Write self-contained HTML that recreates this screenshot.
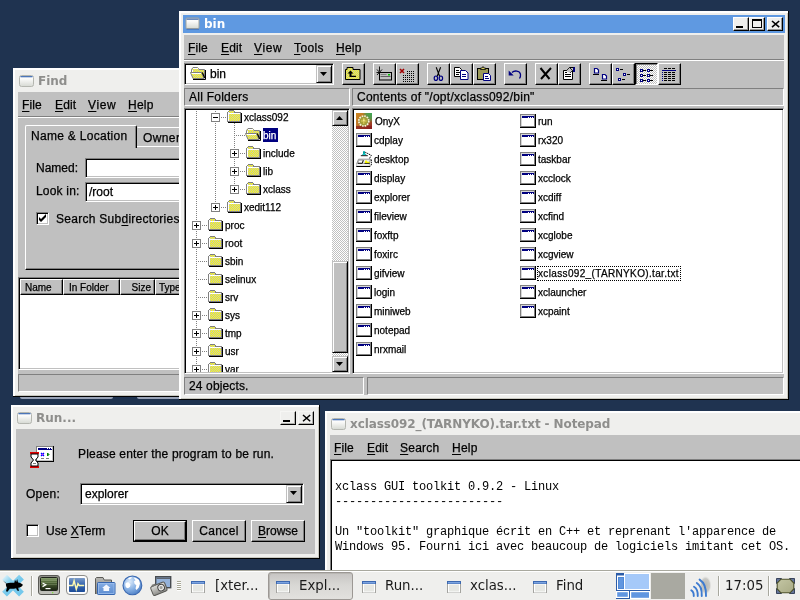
<!DOCTYPE html>
<html lang="en"><head><meta charset="utf-8"><title>xclass desktop</title>
<style>
*{box-sizing:border-box;margin:0;padding:0}
html,body{width:800px;height:600px;overflow:hidden;background:#1f3350}
body{position:relative;font-family:"Liberation Sans",sans-serif;font-size:12px;color:#000;line-height:14px}
.a{position:absolute}
.t{position:absolute;white-space:pre;line-height:14px;-webkit-text-stroke:.25px currentColor}
.s{font-size:10px}
u{text-decoration:underline;text-underline-offset:1.5px;text-decoration-thickness:1px}
.win{position:absolute;background:#efefed;border-right:1px solid #000;border-bottom:1px solid #000;box-shadow:inset 2px 2px 0 #fff,inset -1px -1px 0 #c8c8c0}
.ttl{position:absolute;font-family:"DejaVu Sans","Liberation Sans",sans-serif;font-weight:bold;font-size:12px;line-height:14px;white-space:pre}
.cli{position:absolute;background:#c0c0c0;overflow:hidden}
.sunk{position:absolute;border:1px solid;border-color:#808080 #fff #fff #808080;box-shadow:inset 1px 1px 0 #000,inset -1px -1px 0 #c0c0c0}
.sunk1{position:absolute;border:1px solid;border-color:#808080 #fff #fff #808080}
.btn{position:absolute;background:#c0c0c0;border:1px solid;border-color:#fff #000 #000 #fff;box-shadow:inset -1px -1px 0 #808080}
.sbtn{position:absolute;background:#c0c0c0;border:1px solid;border-color:#c0c0c0 #000 #000 #c0c0c0;box-shadow:inset 1px 1px 0 #fff,inset -1px -1px 0 #808080}
.btnp{position:absolute;border:1px solid;border-color:#000 #fff #fff #000;box-shadow:inset 1px 1px 0 #808080;background:repeating-conic-gradient(#fff 0% 25%,#c0c0c0 0% 50%) 0 0/2px 2px}
.dith{position:absolute;background:repeating-conic-gradient(#fff 0% 25%,#c0c0c0 0% 50%) 0 0/2px 2px}
.etch{position:absolute;height:2px;border-top:1px solid #808080;border-bottom:1px solid #fff}
.wh{background:#fff}
.dv{position:absolute;width:1px;background-image:linear-gradient(#808080 50%,transparent 50%);background-size:1px 2px}
.dh{position:absolute;height:1px;background-image:linear-gradient(90deg,#808080 50%,transparent 50%);background-size:2px 1px}
.pm{position:absolute;width:9px;height:9px;border:1px solid #808080;background:#fff}
.pm i{position:absolute;left:1px;top:3px;width:5px;height:1px;background:#000}
.pm b{position:absolute;left:3px;top:1px;width:1px;height:5px;background:#000}
.tb{position:absolute;font-family:"DejaVu Sans","Liberation Sans",sans-serif;font-size:13.33px;line-height:16px;white-space:pre;color:#1a1a1a}
.mono{font-family:"Liberation Mono",monospace;font-size:12px;letter-spacing:-0.2px;line-height:15px;white-space:pre}
svg{position:absolute;overflow:visible}
#r{position:absolute;left:0;top:0;width:800px;height:600px;overflow:hidden;will-change:transform}
</style></head>
<body>
<div id="r">
<svg width="0" height="0" style="left:0;top:0"><defs>
<pattern id="yd" width="2" height="2" patternUnits="userSpaceOnUse"><rect width="2" height="2" fill="#ffff00"/><rect width="1" height="1" fill="#c0c0c0"/><rect x="1" y="1" width="1" height="1" fill="#c0c0c0"/></pattern>
<g id="fold" shape-rendering="crispEdges"><rect x="2" y="1" width="5" height="2" fill="url(#yd)"/><rect x="1" y="3" width="12" height="8" fill="url(#yd)"/><rect x="1" y="3" width="12" height="1" fill="#fff"/><rect x="1" y="2" width="1" height="9" fill="#fff"/><g fill="#808080"><rect x="2" y="0" width="5" height="1"/><rect x="1" y="1" width="1" height="1"/><rect x="7" y="1" width="1" height="1"/><rect x="0" y="2" width="1" height="10"/><rect x="7" y="2" width="7" height="1"/><rect x="13" y="3" width="1" height="9"/><rect x="0" y="11" width="14" height="1"/></g><rect x="14" y="3" width="1" height="10" fill="#000"/><rect x="1" y="12" width="14" height="1" fill="#000"/></g>
<g id="ofold"><path d="M1.500 5.500V2.500L3 0.500H7.500L9 2.500H14.500V10H12.500L11.500 5.500Z" fill="url(#yd)" stroke="#808080"/><path d="M2.500 3V5" stroke="#fff"/><path d="M3 1.500H8" stroke="#fff"/><path d="M0.500 5.500H11.500L14 11.500H3Z" fill="url(#yd)" stroke="#808080"/><path d="M1.500 6.500H11" stroke="#fff"/><path d="M12.300 5.500L14.700 11" stroke="#000" stroke-width="1.200"/><path d="M15.500 3V12.500H3" stroke="#000" fill="none"/></g>
<g id="app"><rect x="0" y="0" width="16" height="14" fill="#000"/><rect x="0" y="0" width="15" height="13" fill="#808080"/><rect x="1" y="1" width="13" height="11" fill="#d8d8d8"/><rect x="2" y="2" width="12" height="10" fill="#fff"/><rect x="2" y="2" width="12" height="2" fill="#000080"/><rect x="8" y="3" width="1" height="1" fill="#fff"/><rect x="10" y="3" width="1" height="1" fill="#fff"/><rect x="12" y="3" width="1" height="1" fill="#fff"/></g>
<g id="wico"><rect x="0.5" y="0.5" width="13" height="10" rx="1.5" fill="#f2f2f0" stroke="#b8b8b4"/><rect x="1" y="1" width="12" height="2" fill="#fff"/></g>
<linearGradient id="wg" x1="0" y1="0" x2="0" y2="1"><stop offset="0" stop-color="#ffffff"/><stop offset=".3" stop-color="#fbfbfa"/><stop offset="1" stop-color="#d6d9d3"/></linearGradient>
</defs></svg>
<div class="a" style="left:20px;top:397px;width:93px;height:2px;background:#98a2b6;border-radius:0 0 3px 3px"></div><div class="a" style="left:137px;top:397px;width:60px;height:2px;background:#98a2b6;border-radius:0 0 3px 3px"></div><div class="win" style="left:13px;top:68px;width:400px;height:329px"><svg style="left:6px;top:7px" width="16" height="13"><rect x="0.5" y="0.5" width="14" height="11" rx="2" fill="url(#wg)" stroke="#b4b6b0"/><rect x="1.5" y="1" width="12" height="1.3" fill="#4c76b8"/></svg><div class="ttl" style="left:25px;top:6px;color:#8e8e8c">Find</div><div class="cli" style="left:5px;top:24px;width:390px;height:300px"><div class="t" style="left:4px;top:6px;letter-spacing:.1px"><u>F</u>ile</div><div class="t" style="left:37px;top:6px;letter-spacing:.15px"><u>E</u>dit</div><div class="t" style="left:70px;top:6px;letter-spacing:.6px"><u>V</u>iew</div><div class="t" style="left:110px;top:6px;letter-spacing:.25px"><u>H</u>elp</div><div class="etch" style="left:0;top:24px;width:390px"></div><div class="a" style="left:7px;top:54px;width:330px;height:124px;border:1px solid;border-color:#fff #000 #000 #fff;box-shadow:inset -1px -1px 0 #808080"></div><div class="a" style="left:119px;top:35px;width:60px;height:19px;border:1px solid;border-color:#fff #000 transparent transparent;border-bottom:0"></div><div class="t" style="left:125px;top:39px;letter-spacing:.4px">Owner</div><div class="a" style="left:7px;top:33px;width:112px;height:23px;background:#c0c0c0;border:1px solid;border-color:#fff #000 transparent #fff;border-bottom:0;border-radius:2px 2px 0 0;box-shadow:inset -1px 0 0 #808080"></div><div class="t" style="left:13px;top:37px;letter-spacing:.29px">Name &amp; Location</div><div class="t" style="left:18px;top:69px;">Named:</div><div class="t" style="left:18px;top:92px;letter-spacing:.19px">Look in:</div><div class="sunk wh" style="left:67px;top:66px;width:200px;height:20px"></div><div class="sunk wh" style="left:67px;top:90px;width:200px;height:20px"></div><div class="t" style="left:71px;top:93px;">/root</div><div class="sunk wh" style="left:18px;top:120px;width:13px;height:13px"><svg style="left:2px;top:2px" width="7" height="7"><path d="M0 2v3l2 2l5-5v-3l-5 5z" fill="#000" transform="translate(0,0)"/></svg></div><div class="t" style="left:38px;top:120px;letter-spacing:.27px">Search Sub<u>d</u>irectories</div><div class="sunk wh" style="left:0px;top:185px;width:390px;height:93px"></div><div class="btn" style="left:2px;top:187px;width:43px;height:16px"></div><div class="t" style="left:7px;top:189px;font-size:10px">Name</div><div class="btn" style="left:45px;top:187px;width:57px;height:16px"></div><div class="t" style="left:51px;top:189px;font-size:10px">In Folder</div><div class="btn" style="left:102px;top:187px;width:35px;height:16px"></div><div class="t" style="left:102px;width:31px;text-align:right;top:189px;font-size:10px">Size</div><div class="btn" style="left:137px;top:187px;width:60px;height:16px"></div><div class="t" style="left:141px;top:189px;font-size:10px">Type</div><div class="sunk1" style="left:0px;top:282px;width:390px;height:18px"></div></div></div><div class="win" style="left:325px;top:411px;width:520px;height:200px"><svg style="left:6px;top:7px" width="16" height="13"><rect x="0.5" y="0.5" width="14" height="11" rx="2" fill="url(#wg)" stroke="#b4b6b0"/><rect x="1.5" y="1" width="12" height="1.3" fill="#4c76b8"/></svg><div class="ttl" style="left:25px;top:6px;color:#8e8e8c;letter-spacing:-.1px">xclass092_(TARNYKO).tar.txt - Notepad</div><div class="cli" style="left:5px;top:24px;width:510px;height:170px"><div class="t" style="left:4px;top:6px;letter-spacing:.1px"><u>F</u>ile</div><div class="t" style="left:37px;top:6px;letter-spacing:.15px"><u>E</u>dit</div><div class="t" style="left:70px;top:6px;letter-spacing:.25px"><u>S</u>earch</div><div class="t" style="left:122px;top:6px;letter-spacing:.25px"><u>H</u>elp</div><div class="sunk wh" style="left:0;top:24px;width:500px;height:150px"></div><div class="a mono" style="left:5px;top:45px">xclass GUI toolkit 0.9.2 - Linux</div><div class="a mono" style="left:5px;top:60px">------------------------</div><div class="a mono" style="left:5px;top:90px">Un "toolkit" graphique écrit en C++ et reprenant l'apparence de</div><div class="a mono" style="left:5px;top:105px">Windows 95. Fourni ici avec beaucoup de logiciels imitant cet OS.</div></div></div><div class="win" style="left:11px;top:405px;width:309px;height:154px"><svg style="left:6px;top:7px" width="16" height="13"><rect x="0.5" y="0.5" width="14" height="11" rx="2" fill="url(#wg)" stroke="#b4b6b0"/><rect x="1.5" y="1" width="12" height="1.3" fill="#4c76b8"/></svg><div class="ttl" style="left:25px;top:6px;color:#8e8e8c">Run...</div><div class="a" style="left:269px;top:6px;width:16px;height:14px;background:#efefed;border:1px solid;border-color:#f6f6f4 #000 #000 #f6f6f4;box-shadow:inset -1px -1px 0 #b0b0ac"><div class="a" style="left:2px;top:8px;width:7px;height:2px;background:#000"></div></div><div class="a" style="left:287px;top:6px;width:16px;height:14px;background:#efefed;border:1px solid;border-color:#f6f6f4 #000 #000 #f6f6f4;box-shadow:inset -1px -1px 0 #b0b0ac"><svg style="left:3px;top:2px" width="10" height="8"><path d="M1 1L8.200 7.200M8.200 1L1 7.200" stroke="#000" stroke-width="1.500" fill="none"/></svg></div><div class="cli" style="left:5px;top:24px;width:299px;height:125px"><svg style="left:14px;top:17px" width="25" height="23"><rect x="6" y="0" width="18" height="16" fill="#000"/><rect x="6" y="0" width="17" height="15" fill="#808080"/><rect x="7" y="1" width="16" height="14" fill="#c0c0c0"/><rect x="7" y="1" width="15" height="13" fill="#fff"/><rect x="8" y="2" width="14" height="2" fill="#000080"/><rect x="17" y="2" width="1" height="1" fill="#fff"/><rect x="19" y="2" width="1" height="1" fill="#fff"/><rect x="21" y="2" width="1" height="1" fill="#fff"/><path d="M11 7l3 3M14 7l-3 3" stroke="#0000ff" stroke-width="1.2"/><rect x="12" y="8" width="1" height="1" fill="#f0f"/><path d="M17.500 10v-3l1.500 1.500z" fill="#008000" stroke="#008000"/><path d="M11 12.500h3M16 12.500h3" stroke="#808080"/><rect x="0" y="6" width="9" height="2" fill="#e00000"/><rect x="0" y="20" width="9" height="2" fill="#e00000"/><path d="M1 8h7v3l-2.500 3l2.500 3v3h-7v-3l2.500-3l-2.500-3z" fill="#fff" stroke="#000" stroke-width="1"/><path d="M3 17.500h3" stroke="#808080"/></svg><div class="t" style="left:62px;top:18px;letter-spacing:.19px">Please enter the program to be run.</div><div class="t" style="left:10px;top:58px;letter-spacing:.26px">Open:</div><div class="sunk wh" style="left:64px;top:54px;width:224px;height:22px;"></div><div class="t" style="left:69px;top:58px;">explorer</div><div class="sbtn" style="left:270px;top:56px;width:16px;height:18px;"><svg style="left:3px;top:5px" width="8" height="4"><path d="M0 0h7l-3.500 4z" fill="#000"/></svg></div><div class="sunk wh" style="left:10px;top:95px;width:13px;height:13px;"></div><div class="t" style="left:30px;top:95px;">Use <u>X</u>Term</div><div class="a" style="left:117px;top:91px;width:54px;height:22px;background:#000"></div><div class="btn" style="left:118px;top:92px;width:52px;height:20px;"></div><div class="t" style="left:118px;top:95px;width:52px;height:14px;text-align:center">OK</div><div class="btn" style="left:176px;top:91px;width:54px;height:22px;"></div><div class="t" style="left:176px;top:95px;width:54px;height:14px;text-align:center;letter-spacing:.35px">Cancel</div><div class="btn" style="left:235px;top:91px;width:54px;height:22px;"></div><div class="t" style="left:235px;top:95px;width:54px;height:14px;text-align:center"><u>B</u>rowse</div></div></div><div class="win" style="left:179px;top:11px;width:610px;height:389px"><div class="a" style="left:4px;top:4px;width:602px;height:18px;background:#5f99e1"></div><svg style="left:6px;top:6px" width="16" height="14"><rect x="1" y="1" width="13" height="10.500" rx="1" fill="url(#wg)" stroke="#a2a49e"/><rect x="1.500" y="1.500" width="12" height="1.300" fill="#4c72ac"/><path d="M1.500 12.300h12.500" stroke="#3c68b0" stroke-width="1" opacity=".7"/></svg><div class="ttl" style="left:25px;top:6px;color:#fff">bin</div><div class="a" style="left:554px;top:6px;width:16px;height:14px;background:#efefed;border:1px solid;border-color:#fff #000 #000 #fff;box-shadow:inset -1px -1px 0 #9a9a98"><div class="a" style="left:2px;top:8px;width:7px;height:2px;background:#000"></div></div><div class="a" style="left:570px;top:6px;width:16px;height:14px;background:#efefed;border:1px solid;border-color:#fff #000 #000 #fff;box-shadow:inset -1px -1px 0 #9a9a98"><div class="a" style="left:2px;top:1px;width:10px;height:9px;border:1px solid #000;border-top-width:2px"></div></div><div class="a" style="left:588px;top:6px;width:16px;height:14px;background:#efefed;border:1px solid;border-color:#fff #000 #000 #fff;box-shadow:inset -1px -1px 0 #9a9a98"><svg style="left:3px;top:2px" width="10" height="8"><path d="M1 1L8.200 7.200M8.200 1L1 7.200" stroke="#000" stroke-width="1.600" fill="none"/></svg></div><div class="cli" style="left:5px;top:24px;width:600px;height:360px"><div class="t" style="left:4px;top:6px;letter-spacing:.1px"><u>F</u>ile</div><div class="t" style="left:37px;top:6px;letter-spacing:.15px"><u>E</u>dit</div><div class="t" style="left:70px;top:6px;letter-spacing:.6px"><u>V</u>iew</div><div class="t" style="left:110px;top:6px;letter-spacing:.4px"><u>T</u>ools</div><div class="t" style="left:152px;top:6px;letter-spacing:.25px"><u>H</u>elp</div><div class="etch" style="left:0;top:24px;width:600px"></div><div class="sunk wh" style="left:0px;top:28px;width:150px;height:22px;"></div><svg style="left:6px;top:32px" width="16" height="16"><use href="#ofold"/></svg><div class="t" style="left:26px;top:32px;">bin</div><div class="sbtn" style="left:132px;top:30px;width:16px;height:18px;"><svg style="left:3px;top:6px" width="8" height="4"><path d="M0 0h7l-3.5 4z" fill="#000"/></svg></div><div class="btn" style="left:158px;top:28px;width:23px;height:22px;"></div><svg style="left:161px;top:31px" width="16" height="16"><path d="M0.500 3.500h1.500v-2h6v2h7v10h-14.500z" fill="url(#yd)" stroke="#000"/><path d="M5.500 4.500l3 3h-2v2.200h4.500v1.300h-6.500v-3.500h-2z" fill="#000"/></svg><div class="btn" style="left:189px;top:28px;width:23px;height:22px;"></div><svg style="left:192px;top:31px" width="16" height="16"><path d="M3.500 0.500v5M0.500 6.500h6M1 3.500l5 5.500M6 3.500l-5 5.500" stroke="#000" stroke-width=".9" fill="none"/><rect x="3.500" y="6.500" width="12" height="7.500" fill="#c0c0c0" stroke="#000"/><path d="M4.500 10.500h10" stroke="#606060"/><path d="M4.500 8.500h6" stroke="#808080"/><rect x="12" y="8" width="2" height="1.500" fill="#00c000"/></svg><div class="btn" style="left:212px;top:28px;width:23px;height:22px;"></div><svg style="left:215px;top:31px" width="16" height="16"><path d="M1 3l4 4M5 3l-4 4" stroke="#a00000" stroke-width="1.6" fill="none"/><g fill="#000"><rect x="8" y="5" width="1" height="1"/><rect x="10" y="5" width="1" height="1"/><rect x="12" y="5" width="1" height="1"/><rect x="14" y="5" width="1" height="1"/><rect x="8" y="7" width="1" height="1"/><rect x="10" y="7" width="1" height="1"/><rect x="12" y="7" width="1" height="1"/><rect x="14" y="7" width="1" height="1"/><rect x="4" y="9" width="1" height="1"/><rect x="6" y="9" width="1" height="1"/><rect x="8" y="9" width="1" height="1"/><rect x="10" y="9" width="1" height="1"/><rect x="12" y="9" width="1" height="1"/><rect x="14" y="9" width="1" height="1"/><rect x="4" y="11" width="1" height="1"/><rect x="6" y="11" width="1" height="1"/><rect x="8" y="11" width="1" height="1"/><rect x="10" y="11" width="1" height="1"/><rect x="12" y="11" width="1" height="1"/><rect x="14" y="11" width="1" height="1"/><rect x="4" y="13" width="1" height="1"/><rect x="6" y="13" width="1" height="1"/><rect x="8" y="13" width="1" height="1"/><rect x="10" y="13" width="1" height="1"/><rect x="12" y="13" width="1" height="1"/><rect x="14" y="13" width="1" height="1"/><rect x="4" y="15" width="1" height="1"/><rect x="6" y="15" width="1" height="1"/><rect x="8" y="15" width="1" height="1"/><rect x="10" y="15" width="1" height="1"/><rect x="12" y="15" width="1" height="1"/><rect x="14" y="15" width="1" height="1"/></g></svg><div class="btn" style="left:243px;top:28px;width:23px;height:22px;"></div><svg style="left:246px;top:31px" width="16" height="16"><path d="M6.200 1.200L9.600 10.200M10.600 1.200L7.200 10.200" stroke="#000" stroke-width="1.100" fill="none"/><ellipse cx="5.900" cy="12.200" rx="1.700" ry="2.200" fill="none" stroke="#000080" stroke-width="1.200"/><ellipse cx="10.900" cy="12.200" rx="1.700" ry="2.200" fill="none" stroke="#000080" stroke-width="1.200"/></svg><div class="btn" style="left:266px;top:28px;width:23px;height:22px;"></div><svg style="left:269px;top:31px" width="16" height="16"><path d="M1.500 1.500h5l2 2v7h-7z" fill="#fff" stroke="#000"/><path d="M3 4.500h3M3 6.500h4M3 8.500h3" stroke="#000"/><path d="M7.500 4.500h5l2.500 2.500v6.500h-7.500z" fill="#fff" stroke="#000080"/><path d="M9 8.500h4M9 10.500h4" stroke="#000080"/></svg><div class="btn" style="left:289px;top:28px;width:23px;height:22px;"></div><svg style="left:292px;top:31px" width="16" height="16"><rect x="1.500" y="2.500" width="11" height="11" fill="#9c9a58" stroke="#000"/><path d="M4.500 3.500v-1.500h1.500l1-1.500l1 1.500h1.500v1.500z" fill="#d8d060" stroke="#000" stroke-width=".8"/><path d="M7.500 7.500h5l2 2v5h-7z" fill="#fff" stroke="#000080"/><path d="M9 10.500h3M9 12.500h4" stroke="#000080"/></svg><div class="btn" style="left:320px;top:28px;width:23px;height:22px;"></div><svg style="left:323px;top:31px" width="16" height="16"><path d="M5 6.500c2-2 8-2.500 8.500 2c.2 1.500-.3 3-1 4" fill="none" stroke="#000080" stroke-width="1.300"/><path d="M1.700 4.500v5h5z" fill="#000080"/></svg><div class="btn" style="left:351px;top:28px;width:23px;height:22px;"></div><svg style="left:354px;top:31px" width="16" height="16"><path d="M2.500 2l9 11M13 2l-10 11" stroke="#000" stroke-width="2" fill="none"/></svg><div class="btn" style="left:374px;top:28px;width:23px;height:22px;"></div><svg style="left:377px;top:31px" width="16" height="16"><path d="M2.500 4.500h9v9h-9z" fill="#fff" stroke="#000"/><path d="M4 8.500h6M4 10.500h6M4 6.500h2" stroke="#000"/><path d="M5 5l3.500-3.500l3 3l-2.500 2.500" fill="#c0c0c0" stroke="#000" stroke-width=".8"/><rect x="12" y="1" width="2" height="5" fill="#000080"/><path d="M8.500 1.500h4" stroke="#000"/></svg><div class="btn" style="left:405px;top:28px;width:23px;height:22px;"></div><svg style="left:408px;top:31px" width="16" height="16"><path d="M2.500 2.500h2.500l1.500 1.500v3h-4z" fill="#fff" stroke="#000080" stroke-width="1.200"/><path d="M1 8.500h6" stroke="#000"/><path d="M10.500 8.500h2.500l1.500 1.500v3h-4z" fill="#fff" stroke="#000080" stroke-width="1.200"/><path d="M9 14.500h6" stroke="#000"/></svg><div class="btn" style="left:428px;top:28px;width:23px;height:22px;"></div><svg style="left:431px;top:31px" width="16" height="16"><rect x="1.500" y="2.500" width="2" height="2" fill="#fff" stroke="#000080"/><path d="M5 3.500h3" stroke="#000"/><rect x="8.500" y="7.500" width="2" height="2" fill="#fff" stroke="#000080"/><path d="M12 8.500h3" stroke="#000"/><rect x="3.500" y="12.500" width="2" height="2" fill="#fff" stroke="#000080"/><path d="M7 13.500h3" stroke="#000"/></svg><div class="btnp" style="left:451px;top:28px;width:23px;height:22px;"></div><svg style="left:454px;top:31px" width="16" height="16"><rect x="2.5" y="3.5" width="2" height="2" fill="#fff" stroke="#000080"/><path d="M5 4.5h3" stroke="#000"/><rect x="9.5" y="3.5" width="2" height="2" fill="#fff" stroke="#000080"/><path d="M12 4.5h3" stroke="#000"/><rect x="2.5" y="8.5" width="2" height="2" fill="#fff" stroke="#000080"/><path d="M5 9.5h3" stroke="#000"/><rect x="9.5" y="8.5" width="2" height="2" fill="#fff" stroke="#000080"/><path d="M12 9.5h3" stroke="#000"/><rect x="2.5" y="13.5" width="2" height="2" fill="#fff" stroke="#000080"/><path d="M5 14.5h3" stroke="#000"/><rect x="9.5" y="13.5" width="2" height="2" fill="#fff" stroke="#000080"/><path d="M12 14.5h3" stroke="#000"/></svg><div class="btn" style="left:474px;top:28px;width:23px;height:22px;"></div><svg style="left:477px;top:31px" width="16" height="16"><path d="M3 2.500h3M7 2.500h3M11 2.500h3" stroke="#000"/><path d="M1 4.500h14" stroke="#000080"/><rect x="1" y="6" width="1" height="1" fill="#000080"/><path d="M3 6.5h3M7 6.5h3M11 6.5h3" stroke="#000"/><rect x="1" y="8" width="1" height="1" fill="#000080"/><path d="M3 8.5h3M7 8.5h3M11 8.5h3" stroke="#000"/><rect x="1" y="10" width="1" height="1" fill="#000080"/><path d="M3 10.5h3M7 10.5h3M11 10.5h3" stroke="#000"/><rect x="1" y="12" width="1" height="1" fill="#000080"/><path d="M3 12.5h3M7 12.5h3M11 12.5h3" stroke="#000"/><rect x="1" y="14" width="1" height="1" fill="#000080"/><path d="M3 14.5h3M7 14.5h3M11 14.5h3" stroke="#000"/></svg><div class="sunk1" style="left:0px;top:53px;width:166px;height:18px;"></div><div class="t" style="left:5px;top:55px;letter-spacing:.25px">All Folders</div><div class="sunk1" style="left:168px;top:53px;width:432px;height:18px;"></div><div class="t" style="left:173px;top:55px;letter-spacing:.26px">Contents of "/opt/xclass092/bin"</div><div class="sunk wh" style="left:0px;top:73px;width:166px;height:266px;overflow:hidden"></div><div class="a" style="left:2px;top:75px;width:146px;height:262px;overflow:hidden"><div class="dv" style="left:10px;top:-1px;width:1px;height:265px"></div><div class="dv" style="left:29px;top:-1px;width:1px;height:99px"></div><div class="dv" style="left:48px;top:13px;width:1px;height:67px"></div><div class="dh" style="left:31px;top:7px;width:10px;height:1px"></div><div class="pm" style="left:25px;top:3px;width:9px;height:9px"><i></i></div><svg style="left:41px;top:0px" width="16" height="16"><use href="#fold"/></svg><div class="t s" style="left:58px;top:1px">xclass092</div><div class="dh" style="left:50px;top:25px;width:10px;height:1px"></div><svg style="left:59px;top:18px" width="17" height="16"><use href="#ofold"/></svg><div class="a" style="left:77px;top:18px;width:15px;height:14px"></div><div class="a" style="left:77px;top:18px;width:15px;height:14px;background:#000080"></div><div class="t s" style="left:77px;top:19px;color:#fff">bin</div><div class="dh" style="left:50px;top:43px;width:10px;height:1px"></div><div class="pm" style="left:44px;top:39px;width:9px;height:9px"><i></i><b></b></div><svg style="left:60px;top:36px" width="16" height="16"><use href="#fold"/></svg><div class="t s" style="left:77px;top:37px">include</div><div class="dh" style="left:50px;top:61px;width:10px;height:1px"></div><div class="pm" style="left:44px;top:57px;width:9px;height:9px"><i></i><b></b></div><svg style="left:60px;top:54px" width="16" height="16"><use href="#fold"/></svg><div class="t s" style="left:77px;top:55px">lib</div><div class="dh" style="left:50px;top:79px;width:10px;height:1px"></div><div class="pm" style="left:44px;top:75px;width:9px;height:9px"><i></i><b></b></div><svg style="left:60px;top:72px" width="16" height="16"><use href="#fold"/></svg><div class="t s" style="left:77px;top:73px">xclass</div><div class="dh" style="left:31px;top:97px;width:10px;height:1px"></div><div class="pm" style="left:25px;top:93px;width:9px;height:9px"><i></i><b></b></div><svg style="left:41px;top:90px" width="16" height="16"><use href="#fold"/></svg><div class="t s" style="left:58px;top:91px">xedit112</div><div class="dh" style="left:12px;top:115px;width:10px;height:1px"></div><div class="pm" style="left:6px;top:111px;width:9px;height:9px"><i></i><b></b></div><svg style="left:22px;top:108px" width="16" height="16"><use href="#fold"/></svg><div class="t s" style="left:39px;top:109px">proc</div><div class="dh" style="left:12px;top:133px;width:10px;height:1px"></div><div class="pm" style="left:6px;top:129px;width:9px;height:9px"><i></i><b></b></div><svg style="left:22px;top:126px" width="16" height="16"><use href="#fold"/></svg><div class="t s" style="left:39px;top:127px">root</div><div class="dh" style="left:12px;top:151px;width:10px;height:1px"></div><svg style="left:22px;top:144px" width="16" height="16"><use href="#fold"/></svg><div class="t s" style="left:39px;top:145px">sbin</div><div class="dh" style="left:12px;top:169px;width:10px;height:1px"></div><svg style="left:22px;top:162px" width="16" height="16"><use href="#fold"/></svg><div class="t s" style="left:39px;top:163px">selinux</div><div class="dh" style="left:12px;top:187px;width:10px;height:1px"></div><svg style="left:22px;top:180px" width="16" height="16"><use href="#fold"/></svg><div class="t s" style="left:39px;top:181px">srv</div><div class="dh" style="left:12px;top:205px;width:10px;height:1px"></div><div class="pm" style="left:6px;top:201px;width:9px;height:9px"><i></i><b></b></div><svg style="left:22px;top:198px" width="16" height="16"><use href="#fold"/></svg><div class="t s" style="left:39px;top:199px">sys</div><div class="dh" style="left:12px;top:223px;width:10px;height:1px"></div><div class="pm" style="left:6px;top:219px;width:9px;height:9px"><i></i><b></b></div><svg style="left:22px;top:216px" width="16" height="16"><use href="#fold"/></svg><div class="t s" style="left:39px;top:217px">tmp</div><div class="dh" style="left:12px;top:241px;width:10px;height:1px"></div><div class="pm" style="left:6px;top:237px;width:9px;height:9px"><i></i><b></b></div><svg style="left:22px;top:234px" width="16" height="16"><use href="#fold"/></svg><div class="t s" style="left:39px;top:235px">usr</div><div class="dh" style="left:12px;top:259px;width:10px;height:1px"></div><div class="pm" style="left:6px;top:255px;width:9px;height:9px"><i></i><b></b></div><svg style="left:22px;top:252px" width="16" height="16"><use href="#fold"/></svg><div class="t s" style="left:39px;top:253px">var</div></div><div class="dith" style="left:148px;top:75px;width:16px;height:262px;"></div><div class="sbtn" style="left:148px;top:75px;width:16px;height:16px;"><svg style="left:3px;top:5px" width="8" height="4"><path d="M0 4h7l-3.5-4z" fill="#000"/></svg></div><div class="sbtn" style="left:148px;top:226px;width:16px;height:92px;"></div><div class="sbtn" style="left:148px;top:321px;width:16px;height:16px;"><svg style="left:3px;top:5px" width="8" height="4"><path d="M0 0h7l-3.5 4z" fill="#000"/></svg></div><div class="sunk wh" style="left:168px;top:73px;width:432px;height:266px;"></div><svg style="left:172px;top:78px" width="16" height="16"><defs><linearGradient id="o1" x1="0" y1="0" x2="1" y2="1"><stop offset="0" stop-color="#d08820"/><stop offset=".5" stop-color="#b87028"/><stop offset="1" stop-color="#8c1c20"/></linearGradient><radialGradient id="o2" cx="1" cy="0" r=".6"><stop offset="0" stop-color="#38a858"/><stop offset=".6" stop-color="#48a050" stop-opacity=".8"/><stop offset="1" stop-color="#48a050" stop-opacity="0"/></radialGradient></defs><rect width="16" height="16" fill="url(#o1)"/><rect width="16" height="16" fill="url(#o2)"/><rect x="0" y="13" width="16" height="3" fill="#8c1c20" opacity=".7"/><circle cx="7.800" cy="8" r="5.300" fill="#9c9a3c"/><circle cx="7.800" cy="8" r="5" fill="none" stroke="#f6f2dc" stroke-width="1.700" stroke-dasharray="1.600 1"/><circle cx="7.800" cy="8" r="3.300" fill="#a8a038"/><path d="M7.800 5v6M5 8h5.600" stroke="#e0d060" stroke-width="1"/><rect x="7" y="6.500" width="1.600" height="1.600" fill="#f4ec90"/></svg><div class="t" style="left:191px;top:80px;font-size:10px">OnyX</div><svg style="left:172px;top:98px" width="16" height="16"><use href="#app"/></svg><div class="t" style="left:190px;top:99px;font-size:10px">cdplay</div><svg style="left:172px;top:116px" width="16" height="16"><path d="M7 0.300h2l.3 2.700l1.700 1.300h-5.500l1.500-1.300z" fill="#00a0a0"/><rect x="7.300" y="2.600" width="1.500" height="1.200" fill="#20e8e8"/><path d="M4.800 4.700h7" stroke="#000" stroke-width=".9"/><path d="M9.300 1.300L15.300 4.300L13.200 8" fill="none" stroke="#000" stroke-width="1" stroke-dasharray="1.300 .800"/><path d="M2.500 8.200h12l-1.300 4.500h-12.500z" fill="#e8e8e8" stroke="#808080" stroke-width=".8"/><path d="M0.600 12.700h12.800v2.300h-12.800z" fill="#fff" stroke="#a0a0a0" stroke-width=".6"/><path d="M0.300 15.500h13.700" stroke="#000" stroke-width="1"/><path d="M15.300 8.500v5.500l-1.300 1.500" fill="none" stroke="#000" stroke-width="1" stroke-dasharray="1.500 .700"/><path d="M2.800 9.200h4.400l-1 3h-4.400z" fill="#fff" stroke="#606060" stroke-width=".5"/><path d="M2 12.300h4.300l1-3" fill="none" stroke="#000" stroke-width=".9"/><path d="M9.300 9.500h1.500l.5 1.300h2l.4 1.500h-5z" fill="#ffff00"/><path d="M8.500 12.400h5.300" stroke="#000" stroke-width=".8"/></svg><div class="t" style="left:190px;top:118px;font-size:10px">desktop</div><svg style="left:172px;top:136px" width="16" height="16"><use href="#app"/></svg><div class="t" style="left:190px;top:137px;font-size:10px">display</div><svg style="left:172px;top:155px" width="16" height="16"><use href="#app"/></svg><div class="t" style="left:190px;top:156px;font-size:10px">explorer</div><svg style="left:172px;top:174px" width="16" height="16"><use href="#app"/></svg><div class="t" style="left:190px;top:175px;font-size:10px">fileview</div><svg style="left:172px;top:193px" width="16" height="16"><use href="#app"/></svg><div class="t" style="left:190px;top:194px;font-size:10px">foxftp</div><svg style="left:172px;top:212px" width="16" height="16"><use href="#app"/></svg><div class="t" style="left:190px;top:213px;font-size:10px">foxirc</div><svg style="left:172px;top:231px" width="16" height="16"><use href="#app"/></svg><div class="t" style="left:190px;top:232px;font-size:10px">gifview</div><svg style="left:172px;top:250px" width="16" height="16"><use href="#app"/></svg><div class="t" style="left:190px;top:251px;font-size:10px">login</div><svg style="left:172px;top:269px" width="16" height="16"><use href="#app"/></svg><div class="t" style="left:190px;top:270px;font-size:10px">miniweb</div><svg style="left:172px;top:288px" width="16" height="16"><use href="#app"/></svg><div class="t" style="left:190px;top:289px;font-size:10px">notepad</div><svg style="left:172px;top:307px" width="16" height="16"><use href="#app"/></svg><div class="t" style="left:190px;top:308px;font-size:10px">nrxmail</div><svg style="left:336px;top:79px" width="16" height="16"><use href="#app"/></svg><div class="t" style="left:354px;top:80px;font-size:10px">run</div><svg style="left:336px;top:98px" width="16" height="16"><use href="#app"/></svg><div class="t" style="left:354px;top:99px;font-size:10px">rx320</div><svg style="left:336px;top:117px" width="16" height="16"><use href="#app"/></svg><div class="t" style="left:354px;top:118px;font-size:10px">taskbar</div><svg style="left:336px;top:136px" width="16" height="16"><use href="#app"/></svg><div class="t" style="left:354px;top:137px;font-size:10px">xcclock</div><svg style="left:336px;top:155px" width="16" height="16"><use href="#app"/></svg><div class="t" style="left:354px;top:156px;font-size:10px">xcdiff</div><svg style="left:336px;top:174px" width="16" height="16"><use href="#app"/></svg><div class="t" style="left:354px;top:175px;font-size:10px">xcfind</div><svg style="left:336px;top:193px" width="16" height="16"><use href="#app"/></svg><div class="t" style="left:354px;top:194px;font-size:10px">xcglobe</div><svg style="left:336px;top:212px" width="16" height="16"><use href="#app"/></svg><div class="t" style="left:354px;top:213px;font-size:10px">xcgview</div><svg style="left:336px;top:231px" width="16" height="16"><use href="#app"/></svg><div class="t" style="left:354px;top:232px;font-size:10px;letter-spacing:.35px">xclass092_(TARNYKO).tar.txt</div><div class="a" style="left:353px;top:231px;width:144px;height:15px;border:1px dotted #000"></div><svg style="left:336px;top:250px" width="16" height="16"><use href="#app"/></svg><div class="t" style="left:354px;top:251px;font-size:10px">xclauncher</div><svg style="left:336px;top:269px" width="16" height="16"><use href="#app"/></svg><div class="t" style="left:354px;top:270px;font-size:10px">xcpaint</div><div class="sunk1" style="left:0px;top:342px;width:180px;height:18px;"></div><div class="t" style="left:5px;top:344px;letter-spacing:.14px">24 objects.</div><div class="sunk1" style="left:183px;top:342px;width:417px;height:18px;"></div></div></div><div class="a" style="left:0;top:570px;width:800px;height:30px;background:#efefed;border-top:1px solid #a9a99f;box-shadow:inset 0 1px 0 #fff"><svg style="left:2px;top:3px" width="22" height="23" ><defs><linearGradient id="xg" gradientUnits="userSpaceOnUse" x1="1" y1="1" x2="12" y2="12"><stop offset="0" stop-color="#f2fafd"/><stop offset=".55" stop-color="#8ed4f0"/><stop offset="1" stop-color="#74c8ec"/></linearGradient></defs><path d="M4.92 0.81L21.89 17.78L17.08 22.59L0.11 5.62ZM0.11 17.78L17.08 0.81L21.89 5.62L4.92 22.59Z" fill="url(#xg)"/><path d="M0.800 6.500l3.200 2.900c1.500-.5 5.500-.9 8.300-.6l.7-3l1.200 2.300l.9-3.100l1 3.400c1.800.3 3.600 1.200 4.800 2.300c-.3 1.500-2.400 2.700-4.700 3.100l.8 3.200l-1.800-.6l-1.100-2.100c-2 .5-4.500.7-6.300.4l-2.300 3.100l-1.500-.5l.9-3.700c-1-1.300-1.200-3.300-.8-4.600z" fill="#000"/></svg><div class="a" style="left:31px;top:5px;width:1px;height:20px;background:#a8a89e"></div><div class="a" style="left:32px;top:5px;width:1px;height:20px;background:#fff"></div><svg style="left:38px;top:4px" width="22" height="20" ><defs><linearGradient id="tg" x1="0" y1="0" x2="0" y2="1"><stop offset="0" stop-color="#90a878"/><stop offset=".35" stop-color="#506838"/><stop offset="1" stop-color="#182010"/></linearGradient><linearGradient id="tb" x1="0" y1="0" x2="0" y2="1"><stop offset="0" stop-color="#8c8c86"/><stop offset="1" stop-color="#c4c4be"/></linearGradient></defs><rect x="0.500" y="0.500" width="21" height="19" rx="2.500" fill="url(#tb)" stroke="#5a5a56"/><rect x="2.500" y="2.500" width="17" height="13" rx="1" fill="url(#tg)" stroke="#20241c"/><path d="M3 5.500h16M3 7.500h16M3 9.500h16" stroke="#c0d0a8" stroke-width=".5" opacity=".5"/><path d="M4.500 8l3.200 1.800l-3.200 1.800" stroke="#fff" stroke-width="1.300" fill="none"/><rect x="7.500" y="13" width="5" height="1.200" fill="#fff"/><rect x="14" y="17" width="1.300" height="1.300" fill="#80e040"/></svg><svg style="left:66px;top:4px" width="22" height="20" ><defs><linearGradient id="mg" x1="0" y1="0" x2="0" y2="1"><stop offset="0" stop-color="#7c9cc8"/><stop offset=".45" stop-color="#3a68b0"/><stop offset="1" stop-color="#1c4c98"/></linearGradient></defs><rect x="0.500" y="0.500" width="21" height="19" rx="3.500" fill="#fdfdfd" stroke="#8c8c88"/><rect x="3" y="3" width="16" height="14" rx=".8" fill="url(#mg)"/><path d="M3 10.500h3.800l1.300-4.700l2.200 8.400l1.700-5.500l1.200 1.800h5" stroke="#fcf8b0" stroke-width="1.500" fill="none"/></svg><svg style="left:95px;top:6px" width="21" height="18" ><defs><linearGradient id="fg" x1="0" y1="0" x2="0" y2="1"><stop offset="0" stop-color="#b8b8b4"/><stop offset="1" stop-color="#84847f"/></linearGradient><linearGradient id="fb" x1="0" y1="0" x2="0" y2="1"><stop offset="0" stop-color="#86aee4"/><stop offset="1" stop-color="#5c8cd0"/></linearGradient></defs><path d="M0.500 17v-15.500l1-1h6.500l1.200 2.500h7.300v14" fill="url(#fg)" stroke="#5c5c58"/><rect x="2.500" y="5.500" width="17.500" height="12" rx=".8" fill="url(#fb)" stroke="#3566b0"/><rect x="3.500" y="6.500" width="15.500" height="10" fill="none" stroke="#a4c4f0" stroke-width=".7"/><path d="M11.300 7.600l4.200 3.300h-1.400v3.100h-5.600v-3.100h-1.400z" fill="#f4f8fe"/></svg><svg style="left:122px;top:4px" width="21" height="21" ><defs><radialGradient id="gg" cx=".35" cy=".3" r=".85"><stop offset="0" stop-color="#dcebfb"/><stop offset=".5" stop-color="#86b0e4"/><stop offset="1" stop-color="#3c70bc"/></radialGradient></defs><circle cx="10.400" cy="10.400" r="9.400" fill="url(#gg)" stroke="#3a68b0" stroke-width="1.100"/><path d="M3.500 8.500c1-1 2.500-1.500 3.500-.8l1.500 1.800l-.5 2.200l-2 1.500l-1.800-.8c-.8-1.200-1-2.700-.7-3.900z" fill="#fff"/><path d="M11.500 2.500c2 .2 4 1 5.500 2.500l1 3.500l-1.200 4l-2.300 2.500l-1-1.500l.8-3.200l-1.800-1.500l-.5-2.500l1.500-1z" fill="#fff"/><path d="M6 3.200l3-1.200l1 .8l-2.500 1.800z" fill="#fff"/></svg><svg style="left:151px;top:5px" width="21" height="20" ><defs><linearGradient id="cg" x1="0" y1="0" x2="0" y2="1"><stop offset="0" stop-color="#e0e0dc"/><stop offset="1" stop-color="#8c8c88"/></linearGradient></defs><rect x="4.700" y="0.700" width="15" height="11" fill="#94b2da" stroke="#484c50" stroke-width="1.400"/><rect x="5.500" y="1.500" width="13.500" height="1.500" fill="#5c6470"/><g transform="rotate(-22 8 13)"><rect x="0.500" y="8" width="15" height="9.500" rx="1.800" fill="url(#cg)" stroke="#585854"/><rect x="2.500" y="6.500" width="4" height="2" rx=".5" fill="#787874"/><circle cx="10.500" cy="12.500" r="3.300" fill="#ececea" stroke="#404040"/><circle cx="10.500" cy="12.500" r="1.600" fill="#a0a09c"/></g></svg><div class="a" style="left:177px;top:10px;width:4px;height:2px;background:linear-gradient(#a8a896 50%,#fff 50%)"></div><div class="a" style="left:177px;top:12px;width:4px;height:2px;background:linear-gradient(#a8a896 50%,#fff 50%)"></div><div class="a" style="left:177px;top:14px;width:4px;height:2px;background:linear-gradient(#a8a896 50%,#fff 50%)"></div><div class="a" style="left:177px;top:16px;width:4px;height:2px;background:linear-gradient(#a8a896 50%,#fff 50%)"></div><div class="a" style="left:177px;top:18px;width:4px;height:2px;background:linear-gradient(#a8a896 50%,#fff 50%)"></div><div class="a" style="left:268px;top:1px;width:85px;height:28px;border:1px solid #9c9894;border-radius:3px;background:linear-gradient(#c6c4c2,#d8d7d4 45%,#e2e1de);box-shadow:inset 1px 1px 0 #b8b6b2"></div><svg style="left:191px;top:10px" width="14" height="12" ><rect x="0.500" y="0.500" width="13" height="11" fill="#e6e7e3" stroke="#a4a4a0"/><rect x="1.500" y="3" width="11" height="8" fill="none" stroke="#fff"/><rect x="0" y="0" width="14" height="3" fill="#3c68b0"/><rect x="1" y="1" width="12" height="1.500" fill="#7ca4e0"/></svg><div class="tb" style="left:215px;top:7px">[xter...</div><svg style="left:276px;top:10px" width="14" height="12" ><rect x="0.500" y="0.500" width="13" height="11" fill="#e6e7e3" stroke="#a4a4a0"/><rect x="1.500" y="3" width="11" height="8" fill="none" stroke="#fff"/><rect x="0" y="0" width="14" height="3" fill="#3c68b0"/><rect x="1" y="1" width="12" height="1.500" fill="#7ca4e0"/></svg><div class="tb" style="left:299px;top:7px">Expl...</div><svg style="left:362px;top:10px" width="14" height="12" ><rect x="0.500" y="0.500" width="13" height="11" fill="#e6e7e3" stroke="#a4a4a0"/><rect x="1.500" y="3" width="11" height="8" fill="none" stroke="#fff"/><rect x="0" y="0" width="14" height="3" fill="#3c68b0"/><rect x="1" y="1" width="12" height="1.500" fill="#7ca4e0"/></svg><div class="tb" style="left:385px;top:7px">Run...</div><svg style="left:447px;top:10px" width="14" height="12" ><rect x="0.500" y="0.500" width="13" height="11" fill="#e6e7e3" stroke="#a4a4a0"/><rect x="1.500" y="3" width="11" height="8" fill="none" stroke="#fff"/><rect x="0" y="0" width="14" height="3" fill="#3c68b0"/><rect x="1" y="1" width="12" height="1.500" fill="#7ca4e0"/></svg><div class="tb" style="left:470px;top:7px">xclas...</div><svg style="left:533px;top:10px" width="14" height="12" ><rect x="0.500" y="0.500" width="13" height="11" fill="#e6e7e3" stroke="#a4a4a0"/><rect x="1.500" y="3" width="11" height="8" fill="none" stroke="#fff"/><rect x="0" y="0" width="14" height="3" fill="#3c68b0"/><rect x="1" y="1" width="12" height="1.500" fill="#7ca4e0"/></svg><div class="tb" style="left:556px;top:7px">Find</div><svg style="left:616px;top:2px" width="69" height="26" ><rect x="0" y="0" width="34" height="26" fill="#fff"/><rect x="35" y="0" width="34" height="26" fill="#a9a9a1"/><rect x="9" y="1" width="24" height="15" fill="#a5c9f9"/><rect x="0" y="0" width="8" height="2.500" fill="#2c5ca8"/><rect x="0" y="0" width="1" height="18" fill="#2c5ca8"/><rect x="0" y="17" width="34" height="1" fill="#2c5ca8"/><rect x="13" y="17" width="1" height="9" fill="#2c5ca8"/><rect x="0" y="25" width="14" height="1" fill="#2c5ca8"/><rect x="2" y="4" width="6" height="12" fill="#6096e0"/><rect x="2.500" y="4.500" width="5" height="11" fill="none" stroke="#5088d4"/><rect x="1.200" y="19.200" width="10.600" height="4.600" fill="#6096e0"/><rect x="15.200" y="19.200" width="17.800" height="5.600" fill="#6096e0"/></svg><svg style="left:686px;top:-1px" width="40" height="30" ><defs><radialGradient id="ng"><stop offset="0" stop-color="#b8b8b4"/><stop offset=".7" stop-color="#c8c8c4"/><stop offset="1" stop-color="#e4e4e2" stop-opacity="0"/></radialGradient></defs><ellipse cx="19.500" cy="15.300" rx="6" ry="9.500" fill="url(#ng)"/><g fill="none" stroke="#3d7bd0" stroke-width="1.900" stroke-linecap="round"><path d="M5.300 20.300Q7.900 21.500 7.750 26"/><path d="M8 16.700Q12 19 11.750 26"/><path d="M10.800 13Q16.200 16.300 15.750 26"/><path d="M13.600 9.600Q20.600 14 20 26"/></g></svg><div class="a" style="left:718px;top:5px;width:1px;height:20px;background:#a8a89e"></div><div class="a" style="left:719px;top:5px;width:1px;height:20px;background:#fff"></div><div class="tb" style="left:725px;top:7px">17:05</div><div class="a" style="left:768px;top:5px;width:1px;height:20px;background:#a8a89e"></div><div class="a" style="left:769px;top:5px;width:1px;height:20px;background:#fff"></div><svg style="left:776px;top:7px" width="20" height="17" ><defs><linearGradient id="dg" x1="0" y1="0" x2="1" y2="1"><stop offset="0" stop-color="#c4c6a4"/><stop offset="1" stop-color="#a8aa84"/></linearGradient></defs><g fill="#64749a" stroke="#2c3850" stroke-width=".9"><path d="M0.500 0.500h5l-5 5z"/><path d="M18.500 0.500h-5l5 5z"/><path d="M0.500 15.500h5l-5-5z"/><path d="M18.500 15.500h-5l5-5z"/></g><path d="M5 1.200h9l3.800 3.800v6l-3.800 3.800h-9l-3.800-3.800v-6z" fill="url(#dg)" stroke="#4c5028" stroke-width="1.100"/></svg></div></div>
</body></html>
